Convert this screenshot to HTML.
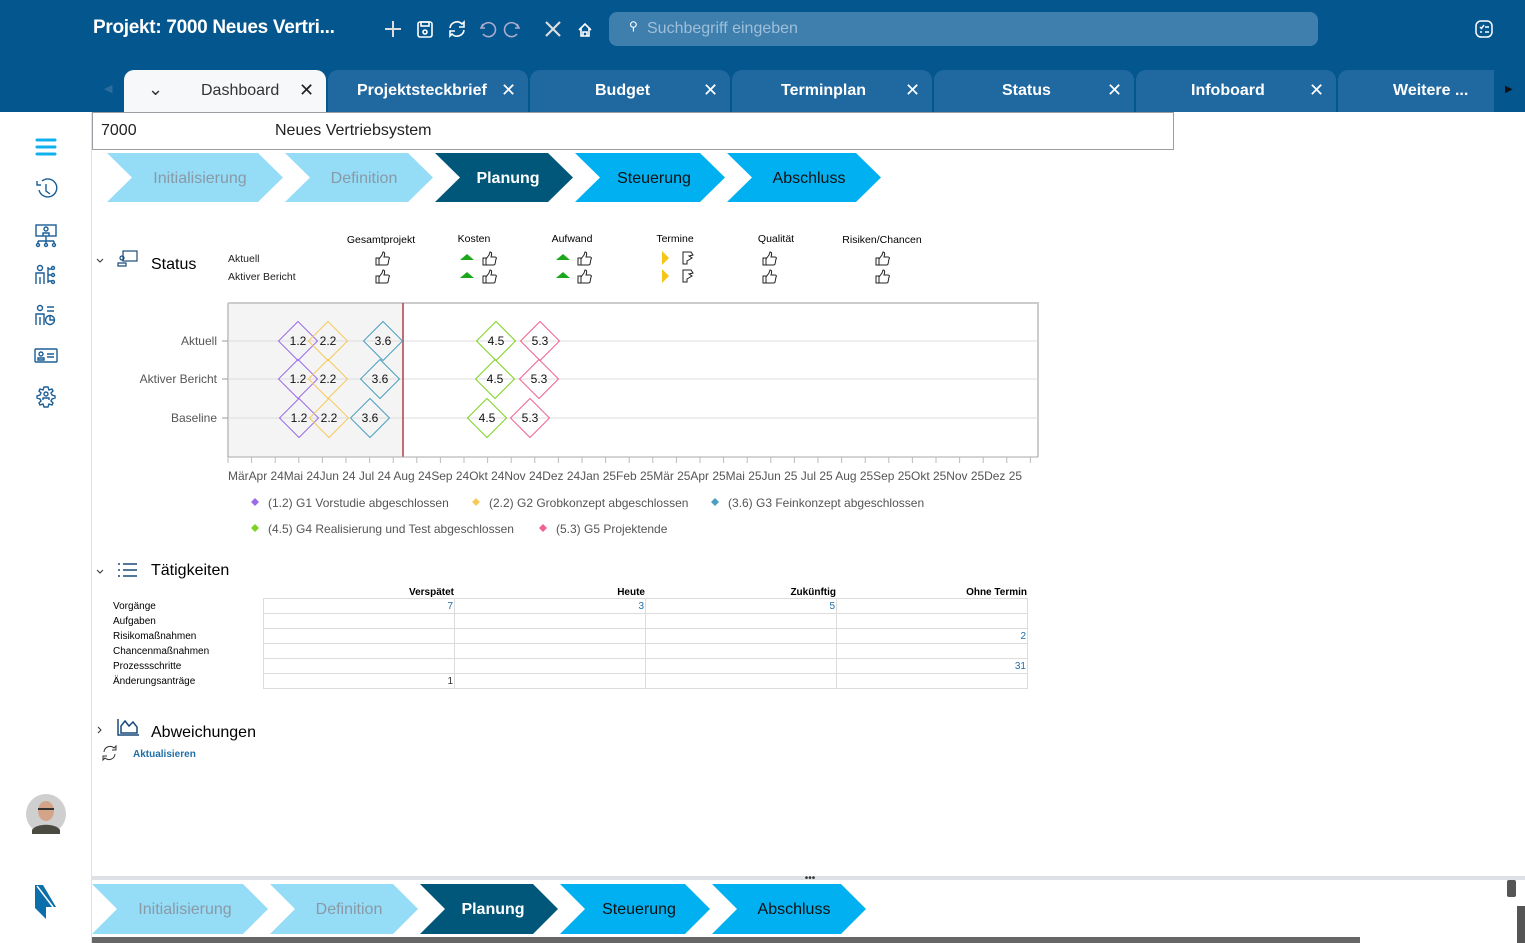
<!DOCTYPE html>
<html><head><meta charset="utf-8"><style>
*{box-sizing:border-box;margin:0;padding:0}
body{width:1525px;height:943px;overflow:hidden;background:#fff;font-family:"Liberation Sans",sans-serif;position:relative;color:#222}
.abs{position:absolute}
.hdr{left:0;top:0;width:1525px;height:112px;background:#04568f}
.title{left:93px;top:17px;color:#fff;font-weight:bold;font-size:19px;letter-spacing:-0.3px}
.search{left:609px;top:12px;width:709px;height:34px;background:#3f7fae;border-radius:8px;color:#9fbfd9;font-size:16px;padding:8px 0 0 38px}
.tab{top:70px;height:42px;width:200px;background:#2068a0;border-radius:10px 10px 0 0;color:#fff;font-size:16px;font-weight:bold}
.tab span{position:absolute;top:12px}
.tab .x{font-weight:normal;font-size:18px;top:10px}
.side{left:0;top:112px;width:92px;height:831px;border-right:1px solid #e2e2e2}
</style></head><body>
<div class="abs hdr"></div>
<div class="abs title">Projekt: 7000 Neues Vertri...</div>
<svg class="abs" style="left:380px;top:16px" width="230" height="28" fill="none" stroke="#fff" stroke-width="1.6">
<path d="M13 5v16M5 13h16" stroke="#ddd" stroke-width="2"/>
<rect x="38" y="6" width="14" height="15" rx="2"/><rect x="41" y="6" width="8" height="4"/><circle cx="45" cy="16" r="2"/>
<path d="M70 12a7 7 0 0 1 12-4l2-2v5h-5M84 14a7 7 0 0 1-12 4l-2 2v-5h5"/>
<path d="M103 8l-2 4 4 0M102 11a7 7 0 1 1 1 7" stroke="#aac"/>
<path d="M137 8l2 4-4 0M138 11a7 7 0 1 0-1 7" stroke="#aac"/>
<path d="M166 6l14 14M180 6l-14 14" stroke="#ddd" stroke-width="2.2"/>
<path d="M199 14l6-6 6 6M201 12v8h8v-8M203 20v-4h4v4"/>
</svg>
<div class="abs search"><span style="position:absolute;left:20px;top:7px;font-size:12px;color:#fff">&#9906;</span>Suchbegriff eingeben</div>
<svg class="abs" style="left:1474px;top:19px" width="20" height="20" fill="none" stroke="#fff" stroke-width="1.5"><rect x="2" y="2" width="16" height="16" rx="5"/><path d="M6 8l1.5 1.5L10 6M11 8h4M6 13h2M11 13h4"/></svg>
<div class="abs" style="left:104px;top:82px;color:#2c6c9c;font-size:11px">&#9664;</div>
<div class="abs tab" style="left:124px;width:202px;background:#f7f8fa;color:#333;font-weight:normal"><span style="left:24px;top:9px;font-size:18px">&#8964;</span><span style="left:77px">Dashboard</span><span class="x" style="left:175px;color:#222">✕</span></div>
<div class="abs tab" style="left:328px"><span style="left:29px">Projektsteckbrief</span><span class="x" style="left:173px">✕</span></div>
<div class="abs tab" style="left:530px"><span style="left:65px">Budget</span><span class="x" style="left:173px">✕</span></div>
<div class="abs tab" style="left:732px"><span style="left:49px">Terminplan</span><span class="x" style="left:173px">✕</span></div>
<div class="abs tab" style="left:934px"><span style="left:68px">Status</span><span class="x" style="left:173px">✕</span></div>
<div class="abs tab" style="left:1136px"><span style="left:55px">Infoboard</span><span class="x" style="left:173px">✕</span></div>
<div class="abs tab" style="left:1338px;width:156px;border-radius:10px 0 0 0"><span style="left:55px">Weitere ...</span></div>
<div class="abs" style="left:1505px;top:84px;color:#111;font-size:10px">&#9654;</div>

<div class="abs side"></div>
<svg class="abs" style="left:28px;top:135px" width="40" height="280" fill="none" stroke="#1a5e96" stroke-width="1.4">
<path d="M9 5h18M9 12h18M9 19h18" stroke="#10b0ef" stroke-width="3" stroke-linecap="round"/>
<path d="M11 55a9 9 0 1 0 3-9M9 46v4h4M18 49v7l4 3"/>
<rect x="8" y="90" width="20" height="11"/><circle cx="18" cy="94" r="2"/><path d="M15 101v-3h6v3M18 101v5M10 106h16M10 106v3M18 106v3M26 106v3"/><circle cx="10" cy="110" r="1.5"/><circle cx="18" cy="110" r="1.5"/><circle cx="26" cy="110" r="1.5"/>
<circle cx="12" cy="133" r="2.5"/><path d="M8 149v-11h8v11M12 142v7M20 132v16M20 134h4M20 140h4M20 146h4"/><circle cx="25" cy="133" r="1.5"/><circle cx="25" cy="140" r="1.5"/><circle cx="25" cy="147" r="1.5"/>
<circle cx="12" cy="173" r="2.5"/><path d="M8 190v-11h8v11M12 182v8M19 172h7M19 176h7"/><circle cx="22" cy="185" r="4.5"/><path d="M22 181v4h4"/>
<rect x="7" y="214" width="22" height="13" rx="1"/><circle cx="13" cy="219" r="2"/><path d="M10 225h6v-2h-6zM19 219h7M19 222h7"/>
<path d="M18 252l2 0 1 3 3-1 1 2-2 2 1 2 3 1v2l-3 1-1 2 2 2-1 2-3-1-1 3h-4l-1-3-3 1-1-2 2-2-1-2-3-1v-2l3-1 1-2-2-2 1-2 3 1 1-3z"/><circle cx="18" cy="259" r="2"/><path d="M15 265v-2h6v2"/>
</svg>
<svg class="abs" style="left:26px;top:794px" width="40" height="40"><circle cx="20" cy="20" r="20" fill="#cfcfcf"/><ellipse cx="20" cy="17" rx="8" ry="10" fill="#d4a48a"/><path d="M12 15h16" stroke="#333" stroke-width="2"/><path d="M6 36c4-7 24-7 28 0v4H6z" fill="#4a4a40"/></svg>
<svg class="abs" style="left:33px;top:883px" width="26" height="38"><path d="M2 2h8l13 22H13v12L2 25z" fill="#0c6fac"/><path d="M4 3l16 21" stroke="#fff" stroke-width="1.5"/></svg>

<div class="abs" style="left:92px;top:112px;width:1082px;height:38px;border:1px solid #9a9ea3;font-size:16px"><span style="position:absolute;left:8px;top:9px">7000</span><span style="position:absolute;left:182px;top:9px">Neues Vertriebsystem</span></div>

<svg class="abs" style="left:0;top:0" width="1525" height="943" font-family="Liberation Sans,sans-serif">
<g font-size="16" text-anchor="middle">
<polygon points="107,153 258,153 283,177.5 258,202 107,202 132,177.5" fill="#95dcf7"/><text x="200" y="183" fill="#8a99a6">Initialisierung</text>
<polygon points="285,153 408,153 433,177.5 408,202 285,202 310,177.5" fill="#95dcf7"/><text x="364" y="183" fill="#8a99a6">Definition</text>
<polygon points="435,153 548,153 573,177.5 548,202 435,202 460,177.5" fill="#00577a"/><text x="508" y="183" fill="#fff" font-weight="bold">Planung</text>
<polygon points="575,153 700,153 725,177.5 700,202 575,202 600,177.5" fill="#00b0f0"/><text x="654" y="183" fill="#111">Steuerung</text>
<polygon points="727,153 856,153 881,177.5 856,202 727,202 752,177.5" fill="#00b0f0"/><text x="809" y="183" fill="#111">Abschluss</text>
</g>
<g font-size="16" text-anchor="middle">
<polygon points="92,884 243,884 268,909 243,934 92,934 117,909" fill="#95dcf7"/><text x="185" y="914" fill="#8a99a6">Initialisierung</text>
<polygon points="270,884 393,884 418,909 393,934 270,934 295,909" fill="#95dcf7"/><text x="349" y="914" fill="#8a99a6">Definition</text>
<polygon points="420,884 533,884 558,909 533,934 420,934 445,909" fill="#00577a"/><text x="493" y="914" fill="#fff" font-weight="bold">Planung</text>
<polygon points="560,884 685,884 710,909 685,934 560,934 585,909" fill="#00b0f0"/><text x="639" y="914" fill="#111">Steuerung</text>
<polygon points="712,884 841,884 866,909 841,934 712,934 737,909" fill="#00b0f0"/><text x="794" y="914" fill="#111">Abschluss</text>
</g>
<rect x="92" y="876" width="1433" height="4" fill="#dde1e6"/><text x="810" y="881" font-size="10" text-anchor="middle" fill="#333">•••</text>
<rect x="92" y="937" width="1268" height="6" fill="#666"/>
<rect x="1507" y="880" width="9" height="17" rx="2" fill="#555"/><rect x="1517" y="906" width="8" height="37" fill="#555"/>

<path d="M97 259l3 3 3-3" stroke="#333" fill="none"/>
<g fill="none" stroke="#1a4a7a" stroke-width="1.2"><rect x="123" y="251" width="14" height="10"/><circle cx="122" cy="258" r="2"/><path d="M118 266v-3h8v3z"/></g>
<text x="151" y="269" font-size="16">Status</text>
<g font-size="10.5" fill="#222"><text x="228" y="262">Aktuell</text><text x="228" y="280">Aktiver Bericht</text></g>
<g font-size="10.5" text-anchor="middle"><text x="381" y="243">Gesamtprojekt</text><text x="474" y="242">Kosten</text><text x="572" y="242">Aufwand</text><text x="675" y="242">Termine</text><text x="776" y="242">Qualität</text><text x="882" y="243">Risiken/Chancen</text></g>
<defs><g id="th"><path d="M0 5h3v7H0zM3 6l3-4 1-3c2 0 2 2 1 5h4c1 0 2 1 1 2l-1 5c0 1-1 1-2 1H3" fill="none" stroke="#222" stroke-width="1"/></g>
<g id="tr"><path d="M-7 6l7-6 7 6z" fill="#1aa81a"/></g></defs>
<use href="#th" x="376" y="253"/><use href="#th" x="376" y="271"/>
<use href="#tr" x="467" y="254"/><use href="#th" x="483" y="253"/><use href="#tr" x="467" y="272"/><use href="#th" x="483" y="271"/>
<use href="#tr" x="563" y="254"/><use href="#th" x="578" y="253"/><use href="#tr" x="563" y="272"/><use href="#th" x="578" y="271"/>
<path d="M662 251l7 7-7 7z M662 269l7 7-7 7z" fill="#f5c518"/>
<g fill="none" stroke="#222"><path d="M683 252h8l2 3-4 1 3 2-5 3v3h-4zM683 270h8l2 3-4 1 3 2-5 3v3h-4z"/></g>
<use href="#th" x="763" y="253"/><use href="#th" x="763" y="271"/>
<use href="#th" x="876" y="253"/><use href="#th" x="876" y="271"/>

<rect x="228" y="303" width="175" height="154" fill="#f4f4f4"/>
<path d="M228 303H1038V457M228 303V457" stroke="#ccc" stroke-width="2" fill="none"/>
<path d="M228 341H1038M228 379H1038M228 418H1038" stroke="#ddd"/>
<path d="M222 341h6M222 379h6M222 418h6" stroke="#999"/>
<line x1="403" y1="303" x2="403" y2="457" stroke="#b04040" stroke-width="1.5"/>
<line x1="228" y1="457" x2="1038" y2="457" stroke="#aaa"/>
<g stroke="#bbb" id="ticks"></g>
<g font-size="12" fill="#555" text-anchor="end"><text x="217" y="345">Aktuell</text><text x="217" y="383">Aktiver Bericht</text><text x="217" y="422">Baseline</text></g>
<text x="228" y="480" font-size="12" fill="#555" textLength="794" lengthAdjust="spacingAndGlyphs">MärApr 24Mai 24Jun 24 Jul 24 Aug 24Sep 24Okt 24Nov 24Dez 24Jan 25Feb 25Mär 25Apr 25Mai 25Jun 25 Jul 25 Aug 25Sep 25Okt 25Nov 25Dez 25</text>
<g id="dia" font-size="12" text-anchor="middle" fill="none" stroke-width="1"></g>
<g font-size="12" fill="#555"><path d="M255 498l4 4-4 4-4-4z" fill="#9b6bea"/><text x="268" y="507">(1.2) G1 Vorstudie abgeschlossen</text>
<path d="M476 498l4 4-4 4-4-4z" fill="#f7c95c"/><text x="489" y="507">(2.2) G2 Grobkonzept abgeschlossen</text>
<path d="M715 498l4 4-4 4-4-4z" fill="#4a9fc0"/><text x="728" y="507">(3.6) G3 Feinkonzept abgeschlossen</text>
<path d="M255 524l4 4-4 4-4-4z" fill="#7ed321"/><text x="268" y="533">(4.5) G4 Realisierung und Test abgeschlossen</text>
<path d="M543 524l4 4-4 4-4-4z" fill="#f06292"/><text x="556" y="533">(5.3) G5 Projektende</text></g>

<path d="M97 570l3 3 3-3" stroke="#333" fill="none"/>
<g stroke="#1a4a7a" stroke-width="1.5"><path d="M118 564h2M118 570h2M118 576h2M123 564h14M123 570h14M123 576h14"/></g>
<text x="151" y="575" font-size="16">Tätigkeiten</text>
<g font-size="10" font-weight="bold" text-anchor="end"><text x="454" y="595">Verspätet</text><text x="645" y="595">Heute</text><text x="836" y="595">Zukünftig</text><text x="1027" y="595">Ohne Termin</text></g>
<g font-size="10"><text x="113" y="609">Vorgänge</text><text x="113" y="624">Aufgaben</text><text x="113" y="639">Risikomaßnahmen</text><text x="113" y="654">Chancenmaßnahmen</text><text x="113" y="669">Prozessschritte</text><text x="113" y="684">Änderungsanträge</text></g>
<g stroke="#dcdcdc" fill="none"><rect x="263.5" y="598.5" width="764" height="90"/><path d="M263 613.5h764M263 628.5h764M263 643.5h764M263 658.5h764M263 673.5h764M454.5 598v90M645.5 598v90M836.5 598v90"/></g>
<g font-size="10" fill="#1f6fa8" text-anchor="end"><text x="453" y="609">7</text><text x="644" y="609">3</text><text x="835" y="609">5</text><text x="1026" y="639">2</text><text x="1026" y="669">31</text><text x="453" y="684" fill="#333">1</text></g>

<path d="M98 727l3 3-3 3" stroke="#333" fill="none"/>
<path d="M118 719v16h21M121 733v-7l4-5 4 5 4-4 4 5v6z" stroke="#1a4a7a" stroke-width="1.5" fill="none"/>
<text x="151" y="737" font-size="16">Abweichungen</text>
<path d="M104 752a6 6 0 0 1 10-4l2-2v4h-4M115 754a6 6 0 0 1-10 4l-2 2v-4h4" stroke="#333" fill="none"/>
<text x="133" y="757" font-size="10" fill="#1f6fa8" font-weight="bold">Aktualisieren</text>
</svg>
<script>
var ns="http://www.w3.org/2000/svg";
var t=document.getElementById("ticks");
for(var x=228;x<=1040;x+=23.6){var l=document.createElementNS(ns,"line");l.setAttribute("x1",x);l.setAttribute("x2",x);l.setAttribute("y1",457);l.setAttribute("y2",463);t.appendChild(l);}
var d=document.getElementById("dia");
var C={"1.2":"#9b6bea","2.2":"#f7c95c","3.6":"#4a9fc0","4.5":"#7ed321","5.3":"#f06292"};
var rows=[[341,[298,328,383,496,540]],[379,[298,328,380,495,539]],[418,[299,329,370,487,530]]];
var ks=["1.2","2.2","3.6","4.5","5.3"];
rows.forEach(function(r){r[1].forEach(function(cx,i){var p=document.createElementNS(ns,"path");var y=r[0];
p.setAttribute("d","M"+cx+" "+(y-19.5)+"L"+(cx+19.5)+" "+y+"L"+cx+" "+(y+19.5)+"L"+(cx-19.5)+" "+y+"Z");p.setAttribute("stroke",C[ks[i]]);d.appendChild(p);
var tx=document.createElementNS(ns,"text");tx.setAttribute("x",cx);tx.setAttribute("y",y+4);tx.setAttribute("fill","#111");tx.setAttribute("stroke","none");tx.textContent=ks[i];d.appendChild(tx);});});
</script>
</body></html>
